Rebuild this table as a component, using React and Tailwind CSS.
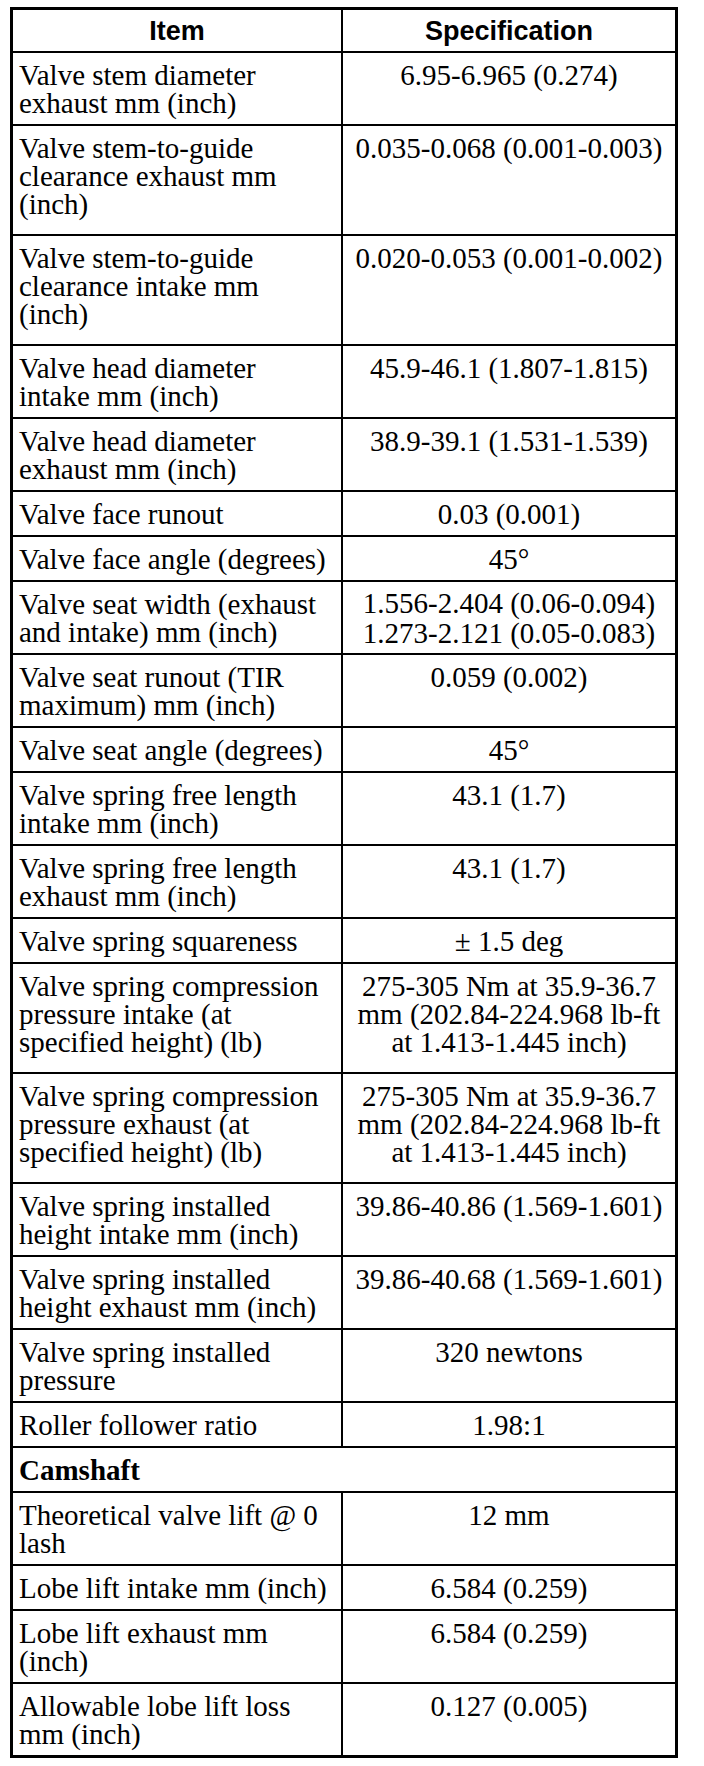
const rows = [
  { item: 'Valve stem diameter exhaust mm (inch)', spec: ['6.95-6.965 (0.274)'] },
  { item: 'Valve stem-to-guide clearance exhaust mm (inch)', spec: ['0.035-0.068 (0.001-0.003)'], tall: true },
  { item: 'Valve stem-to-guide clearance intake mm (inch)', spec: ['0.020-0.053 (0.001-0.002)'], tall: true },
  { item: 'Valve head diameter intake mm (inch)', spec: ['45.9-46.1 (1.807-1.815)'] },
  { item: 'Valve head diameter exhaust mm (inch)', spec: ['38.9-39.1 (1.531-1.539)'] },
  { item: 'Valve face runout', spec: ['0.03 (0.001)'] },
  { item: 'Valve face angle (degrees)', spec: ['45°'] },
  { item: 'Valve seat width (exhaust and intake) mm (inch)', spec: ['1.556-2.404 (0.06-0.094)', '1.273-2.121 (0.05-0.083)'] },
  { item: 'Valve seat runout (TIR maximum) mm (inch)', spec: ['0.059 (0.002)'] },
  { item: 'Valve seat angle (degrees)', spec: ['45°'] },
  { item: 'Valve spring free length intake mm (inch)', spec: ['43.1 (1.7)'] },
  { item: 'Valve spring free length exhaust mm (inch)', spec: ['43.1 (1.7)'] },
  { item: 'Valve spring squareness', spec: ['± 1.5 deg'] },
  { item: 'Valve spring compression pressure intake (at specified height) (lb)', spec: ['275-305 Nm at 35.9-36.7 mm (202.84-224.968 lb-ft at 1.413-1.445 inch)'], tall: true },
  { item: 'Valve spring compression pressure exhaust (at specified height) (lb)', spec: ['275-305 Nm at 35.9-36.7 mm (202.84-224.968 lb-ft at 1.413-1.445 inch)'], tall: true },
  { item: 'Valve spring installed height intake mm (inch)', spec: ['39.86-40.86 (1.569-1.601)'] },
  { item: 'Valve spring installed height exhaust mm (inch)', spec: ['39.86-40.68 (1.569-1.601)'] },
  { item: 'Valve spring installed pressure', spec: ['320 newtons'] },
  { item: 'Roller follower ratio', spec: ['1.98:1'] },
  { section: 'Camshaft' },
  { item: 'Theoretical valve lift @ 0 lash', spec: ['12 mm'] },
  { item: 'Lobe lift intake mm (inch)', spec: ['6.584 (0.259)'] },
  { item: 'Lobe lift exhaust mm (inch)', spec: ['6.584 (0.259)'] },
  { item: 'Allowable lobe lift loss mm (inch)', spec: ['0.127 (0.005)'] },
];

const SpecRow = ({ row, last }) => {
  if (row.section) {
    return (
      <div className={`pl-[6px] pt-[8px] pb-[7px] font-bold ${last ? '' : 'border-b-2 border-black'}`}>
        {row.section}
      </div>
    );
  }

  // 3-line rows sit a bit taller in the original sheet
  const pad = row.tall ? 'pt-[8px] pb-[16px]' : 'pt-[8px] pb-[7px]';
  const stacked = row.spec.length > 1;

  return (
    <div className={`flex ${last ? '' : 'border-b-2 border-black'}`}>
      <div className={`w-[330px] shrink-0 border-r-2 border-black pl-[6px] pr-[10px] ${pad}`}>
        {row.item}
      </div>
      <div className={`flex-1 px-[8px] text-center ${stacked ? 'pt-[6px] leading-[30px]' : pad}`}>
        {row.spec.map((line) => (
          <div key={line}>{line}</div>
        ))}
      </div>
    </div>
  );
};

export default function App() {
  return (
    <div className="min-h-screen bg-white pt-[7px] pl-[10px]">
      <div className="w-[668px] border-[3px] border-black bg-white text-black font-['Liberation_Serif','Times_New_Roman',serif] text-[29px] leading-[28px]">
        {/* header */}
        <div className="flex h-[43px] border-b-2 border-black font-['Liberation_Sans',Arial,sans-serif] font-bold text-[27px]">
          <div className="w-[330px] shrink-0 border-r-2 border-black flex items-center justify-center">Item</div>
          <div className="flex-1 flex items-center justify-center">Specification</div>
        </div>

        {rows.map((row, i) => (
          <SpecRow key={i} row={row} last={i === rows.length - 1} />
        ))}
      </div>
    </div>
  );
}
